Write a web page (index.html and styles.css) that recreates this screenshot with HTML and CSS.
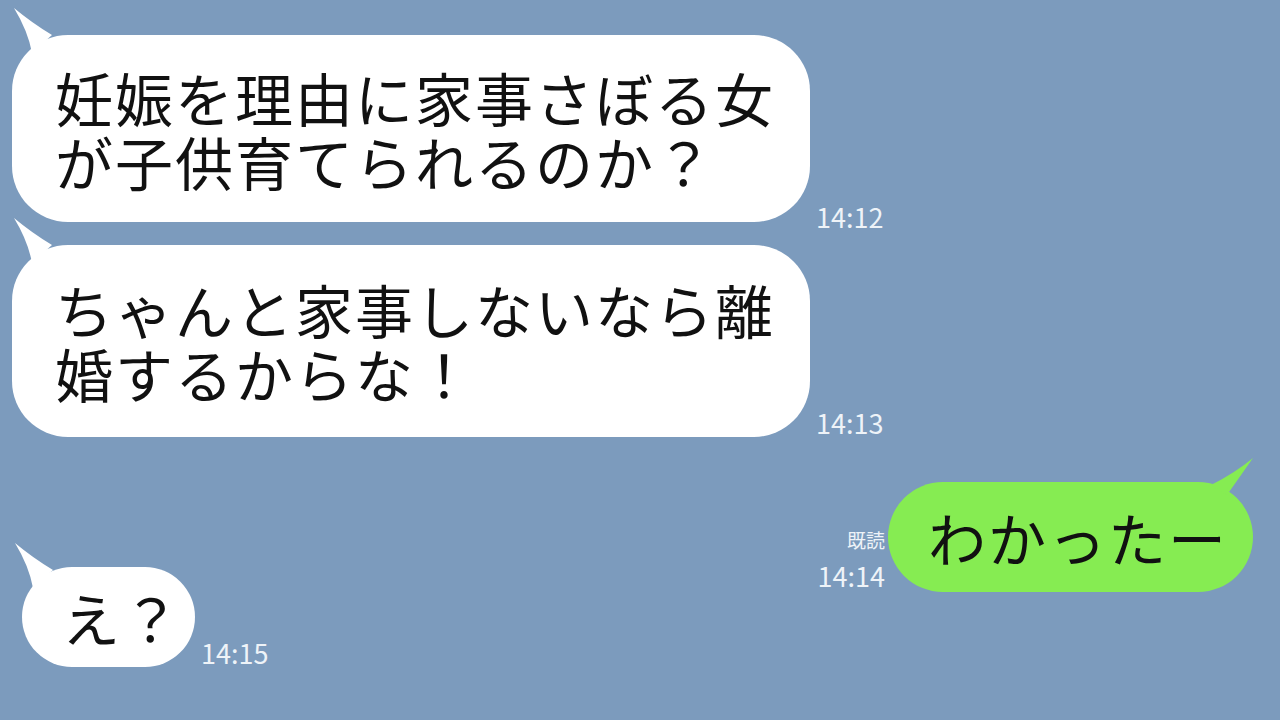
FILE: index.html
```html
<!DOCTYPE html>
<html lang="ja">
<head>
<meta charset="UTF-8">
<meta name="viewport" content="width=device-width, initial-scale=1.0">
<title>トーク</title>
<link rel="stylesheet" href="styles.css">
</head>
<body>

<div class="chat">
    <!-- 相手 -->
    <div class="row row-left first">
        <div class="bubble white">
            <svg class="tail tail-left" width="50" height="50" viewBox="0 0 50 50"><path d="M2 3 Q20 18 40 30 L20 48 Q16 26 2 3 Z"/></svg>
            <p><span class="line">妊娠を理由に家事さぼる女</span><span class="line">が子供育てられるのか？</span></p>
        </div>
        <div class="meta"><span class="time">14:12</span></div>
    </div>

    <div class="row row-left second">
        <div class="bubble white">
            <svg class="tail tail-left" width="50" height="50" viewBox="0 0 50 50"><path d="M2 3 Q20 18 40 30 L20 48 Q16 26 2 3 Z"/></svg>
            <p><span class="line">ちゃんと家事しないなら離</span><span class="line">婚するからな！</span></p>
        </div>
        <div class="meta"><span class="time">14:13</span></div>
    </div>

    <!-- 自分 -->
    <div class="row row-right">
        <div class="meta meta-right">
            <span class="read">既読</span>
            <span class="time">14:14</span>
        </div>
        <div class="bubble green">
            <svg class="tail tail-right" width="50" height="50" viewBox="0 0 50 50"><path d="M48 3 Q36 20 22 40 L6 30 Q30 18 48 3 Z"/></svg>
            <p><span class="line">わかったー</span></p>
        </div>
    </div>

    <div class="row row-left last">
        <div class="bubble white small">
            <svg class="tail tail-left" width="50" height="50" viewBox="0 0 50 50"><path d="M2 3 Q20 18 40 30 L20 48 Q16 26 2 3 Z"/></svg>
            <p><span class="line">え？</span></p>
        </div>
        <div class="meta"><span class="time">14:15</span></div>
    </div>
</div>

</body>
</html>
```

FILE: styles.css
```css
body {
    margin: 0;
    padding: 0;
    background-color: #7c9bbd;
    font-family: "Noto Sans CJK JP", "Noto Sans", sans-serif;
    width: 1280px;
    height: 720px;
    overflow: hidden;
}
.chat {
    display: flex;
    flex-direction: column;
    padding-top: 35px;
}
.row {
    display: flex;
    align-items: flex-end;
}
.row-left {
    padding-left: 12px;
}
.second {
    margin-top: 23px;
}
.row-right {
    justify-content: flex-end;
    padding-right: 27px;
    margin-top: 45px;
}
.last {
    margin-top: -25px;
    padding-left: 22px;
}
.bubble {
    position: relative;
    border-radius: 56px;
}
.bubble p {
    position: relative;
    margin: 0;
    font-size: 58px;
    letter-spacing: 2px;
    color: #111;
    white-space: nowrap;
    z-index: 1;
}
.line {
    display: block;
    height: 64px;
    line-height: 64px;
}
.white {
    background-color: #fff;
    padding: 30px 35px 29px 43px;
}
.white .tail {
    fill: #fff;
}
.second .white {
    padding-top: 32px;
    padding-bottom: 32px;
}
.small {
    padding: 18px 13px 18px 40px;
    border-radius: 50px;
}
.green {
    background-color: #86ec52;
    padding: 23px 25px 23px 40px;
    border-radius: 56px;
}
.green .tail {
    fill: #86ec52;
}
.tail {
    position: absolute;
    top: -30px;
}
.tail-left {
    left: 0;
}
.last .tail-left {
    left: -9px;
    top: -27px;
}
.tail-right {
    right: -2px;
    top: -27px;
}
.meta {
    display: flex;
    flex-direction: column;
    align-items: flex-end;
    margin-left: 6px;
    color: #eef3f8;
}
.first .meta {
    margin-bottom: -9px;
}
.meta-right {
    margin-left: 0;
    margin-right: 3px;
    padding-bottom: 2px;
}
.time {
    font-size: 27px;
    line-height: 28px;
}
.read {
    font-size: 19px;
    line-height: 22px;
    margin-bottom: 11px;
}
```
